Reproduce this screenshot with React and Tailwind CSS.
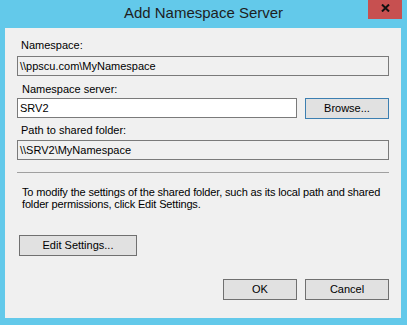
import React from 'react'

const font = { fontFamily: '"Liberation Sans", Arial, sans-serif' }

const Field = ({ value, readOnly }) => (
	<div
		className={`h-[20px] border border-[#7a7a7a] flex items-center pl-[2px] text-[11px] leading-[13px] text-black ${
			readOnly ? 'bg-[#f0f0f0]' : 'bg-white'
		}`}
	>
		{value}
	</div>
)

const Button = ({ children, className = '', focused }) => (
	<div
		className={`h-[21px] flex items-center justify-center text-[11px] leading-[13px] text-black bg-[#e1e1e1] border ${
			focused ? 'border-[#3c7fb1]' : 'border-[#707070]'
		} ${className}`}
	>
		{children}
	</div>
)

const App = () => {
	return (
		<div className="w-[407px] h-[325px] bg-[#63c9ea] flex flex-col" style={font}>
			{/* title bar */}
			<div className="relative h-[28px] flex items-center justify-center">
				<span className="text-[15px] leading-[18px] text-[#1e1e1e] -mt-[3px]">Add Namespace Server</span>
				<div className="absolute right-[5px] top-0 w-[34px] h-[19px] bg-[#c75050] flex items-center justify-center">
					<svg width="9" height="8" viewBox="0 0 9 8" className="-mt-[4px]">
						<path d="M1 0.5 L8 7.5 M8 0.5 L1 7.5" stroke="#111" strokeWidth="2" />
					</svg>
				</div>
			</div>

			{/* client area */}
			<div className="ml-[5px] mr-[6px] h-[290px] bg-[#f0f0f0] px-[12px] flex flex-col text-[11px] leading-[13px] text-black">
				<div className="pt-[11px] pl-[4px]">Namespace:</div>
				<div className="mt-[4px]">
					<Field value="\\ppscu.com\MyNamespace" readOnly />
				</div>

				<div className="mt-[7px] pl-[5px]">Namespace server:</div>
				<div className="mt-[2px] flex gap-[8px]">
					<div className="flex-1">
						<Field value=" SRV2" />
					</div>
					<Button className="w-[84px]" focused>
						Browse...
					</Button>
				</div>

				<div className="mt-[5px] pl-[4px]">Path to shared folder:</div>
				<div className="mt-[3px]">
					<Field value="\\SRV2\MyNamespace" readOnly />
				</div>

				<div className="mt-[12px] h-px bg-[#a0a0a0]" />

				<p className="mt-[13px] pl-[5px] leading-[12px] whitespace-nowrap tracking-[-0.15px]">
					To modify the settings of the shared folder, such as its local path and shared
					<br />
					folder permissions, click Edit Settings.
				</p>

				<div className="mt-[25px] pl-[2px]">
					<Button className="w-[118px]">Edit Settings...</Button>
				</div>

				<div className="mt-[23px] flex justify-end gap-[8px]">
					<Button className="w-[74px]">OK</Button>
					<Button className="w-[84px]">Cancel</Button>
				</div>
			</div>
		</div>
	)
}

export default App
